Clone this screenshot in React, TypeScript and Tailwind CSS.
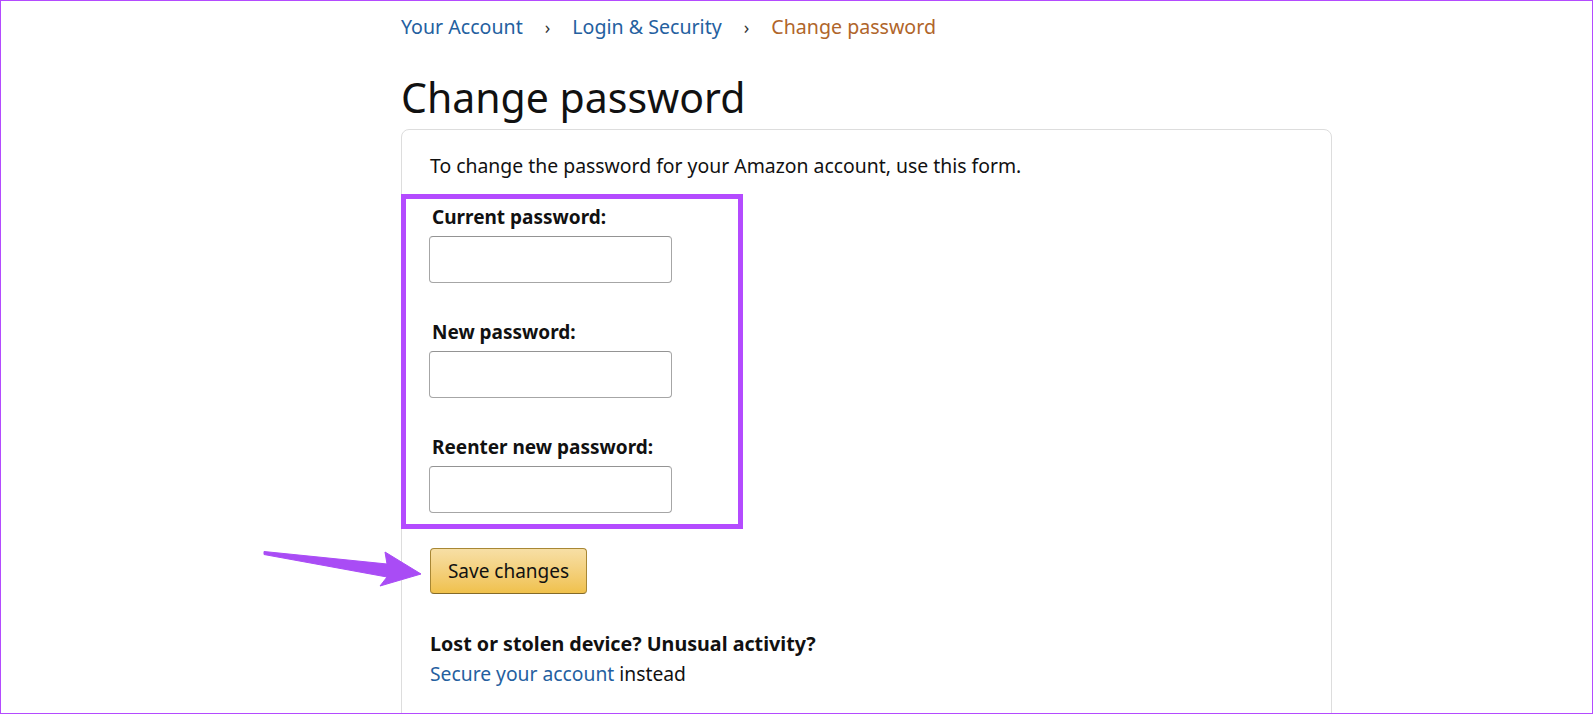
import React from "react";

const font = { fontFamily: "'Noto Sans', 'Open Sans', sans-serif" };

function Field({ label, first }: { label: string; first?: boolean }) {
  return (
    <div className={first ? "" : "mt-[37px]"}>
      <label className="block pl-[3px] text-[19px] font-bold leading-[24px] text-[#111]">{label}</label>
      <input
        type="password"
        className="mt-[7px] block h-[47px] w-[243px] rounded-[4px] border border-[#a6a6a6] border-t-[#949494] bg-white outline-none"
      />
    </div>
  );
}

export default function App() {
  return (
    <div style={font} className="relative h-[714px] w-[1593px] overflow-hidden border border-[#b44bff] bg-white text-[#111]">
      <div className="ml-[400px] w-[931px]">
        <nav className="mt-[11px] flex items-center text-[19.6px] leading-[30px]">
          <a className="text-[#24609f]">Your Account</a>
          <span className="mx-[22px] text-[18px] text-[#333]">›</span>
          <a className="text-[#24609f]">Login &amp; Security</a>
          <span className="mx-[22px] text-[18px] text-[#333]">›</span>
          <span className="text-[#b0652a]">Change password</span>
        </nav>
        <h1 className="mt-[30px] text-[41px] font-normal leading-[50px] text-[#111]">Change password</h1>
        <div className="mt-[7px] h-[700px] rounded-[8px] border border-[#dddddd] px-[28px] pt-[24px]">
          <p className="text-[19.4px] leading-[24px]">To change the password for your Amazon account, use this form.</p>
          <div className="ml-[-29px] mt-[16px] w-[342px] border-[5px] border-[#b44bff] pb-[11px] pl-[23px] pt-[6px]">
            <Field label="Current password:" first />
            <Field label="New password:" />
            <Field label="Reenter new password:" />
          </div>
          <button className="mt-[19px] h-[46px] w-[157px] rounded-[4px] border border-[#a88734] border-b-[#846a29] bg-gradient-to-b from-[#f7dfa5] to-[#f0c14b] text-[19px] text-[#111]">
            Save changes
          </button>
          <div className="mt-[35px] leading-[30px]">
            <div className="text-[19.7px] font-bold">Lost or stolen device? Unusual activity?</div>
            <div className="text-[19.3px]">
              <a className="text-[#24609f]">Secure your account</a> instead
            </div>
          </div>
        </div>
      </div>
      <svg className="pointer-events-none absolute left-0 top-0" width="1593" height="714">
        <polygon
          points="263,550.5 386,563 384,551 420,573 379,585 386,576 263,553.5"
          fill="#a94cf5"
          stroke="#a94cf5"
          strokeWidth="1"
          strokeLinejoin="round"
        />
      </svg>
    </div>
  );
}
